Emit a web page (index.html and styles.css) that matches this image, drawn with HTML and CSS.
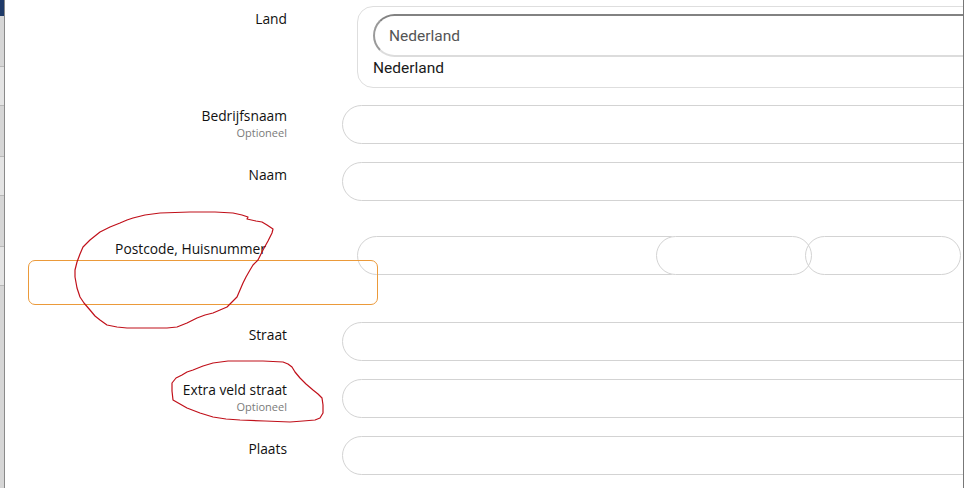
FILE: index.html
```html
<!DOCTYPE html>
<html lang="nl">
<head>
<meta charset="utf-8">
<title>Adresformulier</title>
<link rel="stylesheet" href="styles.css">
</head>
<body>
<div class="strip">
  <div class="strip-top"></div>
  <div class="strip-band"></div>
  <div class="strip-band"></div>
  <div class="strip-band"></div>
</div>
<main class="form">
  <div class="row row-land">
    <div class="label"><span class="label-text">Land</span></div>
    <div class="land-box">
      <div class="select"><span class="select-text">Nederland</span></div>
      <div class="land-value">Nederland</div>
    </div>
  </div>
  <div class="row row-a">
    <div class="label label-opt"><span class="label-text">Bedrijfsnaam</span><span class="optional">Optioneel</span></div>
    <div class="input"></div>
  </div>
  <div class="row row-b">
    <div class="label"><span class="label-text">Naam</span></div>
    <div class="input"></div>
  </div>
  <div class="row row-postcode">
    <div class="label label-postcode"><span class="label-text">Postcode, Huisnummer</span></div>
    <div class="triple">
      <div class="input input-postcode"></div>
      <div class="input input-small input-mid"></div>
      <div class="input input-small input-last"></div>
    </div>
  </div>
  <div class="row row-straat">
    <div class="label"><span class="label-text">Straat</span></div>
    <div class="input"></div>
  </div>
  <div class="row row-b">
    <div class="label label-opt"><span class="label-text">Extra veld straat</span><span class="optional">Optioneel</span></div>
    <div class="input"></div>
  </div>
  <div class="row row-b">
    <div class="label"><span class="label-text">Plaats</span></div>
    <div class="input"></div>
  </div>

  <div class="focus-box"></div>
  <svg class="scribbles" width="964" height="488" viewBox="0 0 964 488" aria-hidden="true">
    <polyline class="scribble" points="160,213 190,212 215,212 233,213 242,215 248,217 247,219 256,221 262,222 267,225 270,227 273,229 272,233 268,241 263,250 258,260 253,265 250,270 246,277 243,283 240,290 237,297 232,302 227,307 220,310 213,313 205,315 197,318 187,323 177,327 167,328 157,328 142,328 127,328 117,327 107,325 100,320 95,316 90,310 84,303 80,297 77,288 75,277 75,270 77,262 80,254 83,247 90,240 100,232 110,227 120,223 127,220 133,218 145,215 160,213"/>
    <polyline class="scribble" points="193,370 203,366 213,363 228,361 243,361 263,361 283,362 288,364 292,367 295,372 300,378 306,384 313,390 318,394 322,398 323,405 323,413 320,418 315,420 303,421 290,422 265,421 240,420 226,419 213,417 200,413 187,408 180,404 173,400 172,391 172,383 176,378 182,375 187,372 193,370"/>
  </svg>
</main>
</body>
</html>
```
FILE: styles.css
```css
* { box-sizing: border-box; }

html, body {
  margin: 0;
  height: 100%;
  background: #ffffff;
}

body {
  display: flex;
  width: 964px;
  height: 488px;
  overflow: hidden;
  font-family: "Open Sans", "Noto Sans", sans-serif;
  color: #111;
}

.strip {
  width: 5px;
  flex: none;
  background: #d6d6d6;
  border-right: 1px solid #8a8a8a;
  display: flex;
  flex-direction: column;
}

.strip-top {
  height: 16px;
  background: #1f3a68;
}

.strip-band {
  height: 40px;
  margin-top: 50px;
  border-top: 1px solid #b8b8b8;
  border-bottom: 1px solid #b8b8b8;
  background: #e4e4e4;
}

.form {
  position: relative;
  flex: 1;
  height: 488px;
  overflow: hidden;
  border-right: 1px solid #777;
  padding-top: 6px;
}

.row {
  display: grid;
  grid-template-columns: 282px 1fr;
  column-gap: 55px;
}

.row-a { margin-top: 17px; }
.row-b { margin-top: 18px; }
.row-postcode { margin-top: 35px; }
.row-straat { margin-top: 47px; }

.label {
  display: flex;
  flex-direction: column;
  align-items: flex-end;
  padding-top: 3px;
  text-align: right;
}

.label-opt { padding-top: 1px; }

.label-text {
  font-size: 13.8px;
  line-height: 20px;
  color: #111;
}

.optional {
  font-size: 11px;
  line-height: 14px;
  color: #7a7a7a;
}

.label-postcode { padding-right: 21px; }

.input {
  height: 39px;
  width: calc(100% + 60px);
  border: 1px solid #d3d3d3;
  border-radius: 20px;
  background: transparent;
}

.land-box {
  margin-left: 15px;
  width: calc(100% + 60px);
  height: 82px;
  border: 1px solid #dedede;
  border-radius: 16px;
  padding: 7px 0 0 15px;
}

.select {
  height: 43px;
  border-top: 2px solid #828282;
  border-left: 2px solid #9a9a9a;
  border-bottom: 2px solid #dcdcdc;
  border-radius: 22px 0 0 22px;
  display: flex;
  align-items: center;
  padding-left: 14px;
}

.select-text {
  font-family: Roboto, "Liberation Sans", sans-serif;
  font-size: 15.5px;
  color: #555;
}

.land-value {
  font-family: Roboto, "Liberation Sans", sans-serif;
  font-size: 15.5px;
  line-height: 22px;
  color: #1a1a1a;
}

.triple {
  display: flex;
  margin-left: 15px;
}

.triple .input { flex: none; }

.input-postcode {
  width: 315px;
  border-radius: 20px 0 0 20px;
}

.input-small {
  width: 156px;
  margin-left: -16px;
}

.input-mid {
  position: relative;
  background: #ffffff;
}

.input-last {
  position: relative;
  margin-left: -7px;
}

.focus-box {
  position: absolute;
  left: 23px;
  top: 260px;
  width: 350px;
  height: 45px;
  border: 1px solid #eb9a3a;
  border-radius: 7px;
}

.scribbles {
  position: absolute;
  left: -5px;
  top: 0;
  pointer-events: none;
}

.scribble {
  fill: none;
  stroke: #c0101a;
  stroke-width: 1.2;
  stroke-linejoin: round;
}
```
